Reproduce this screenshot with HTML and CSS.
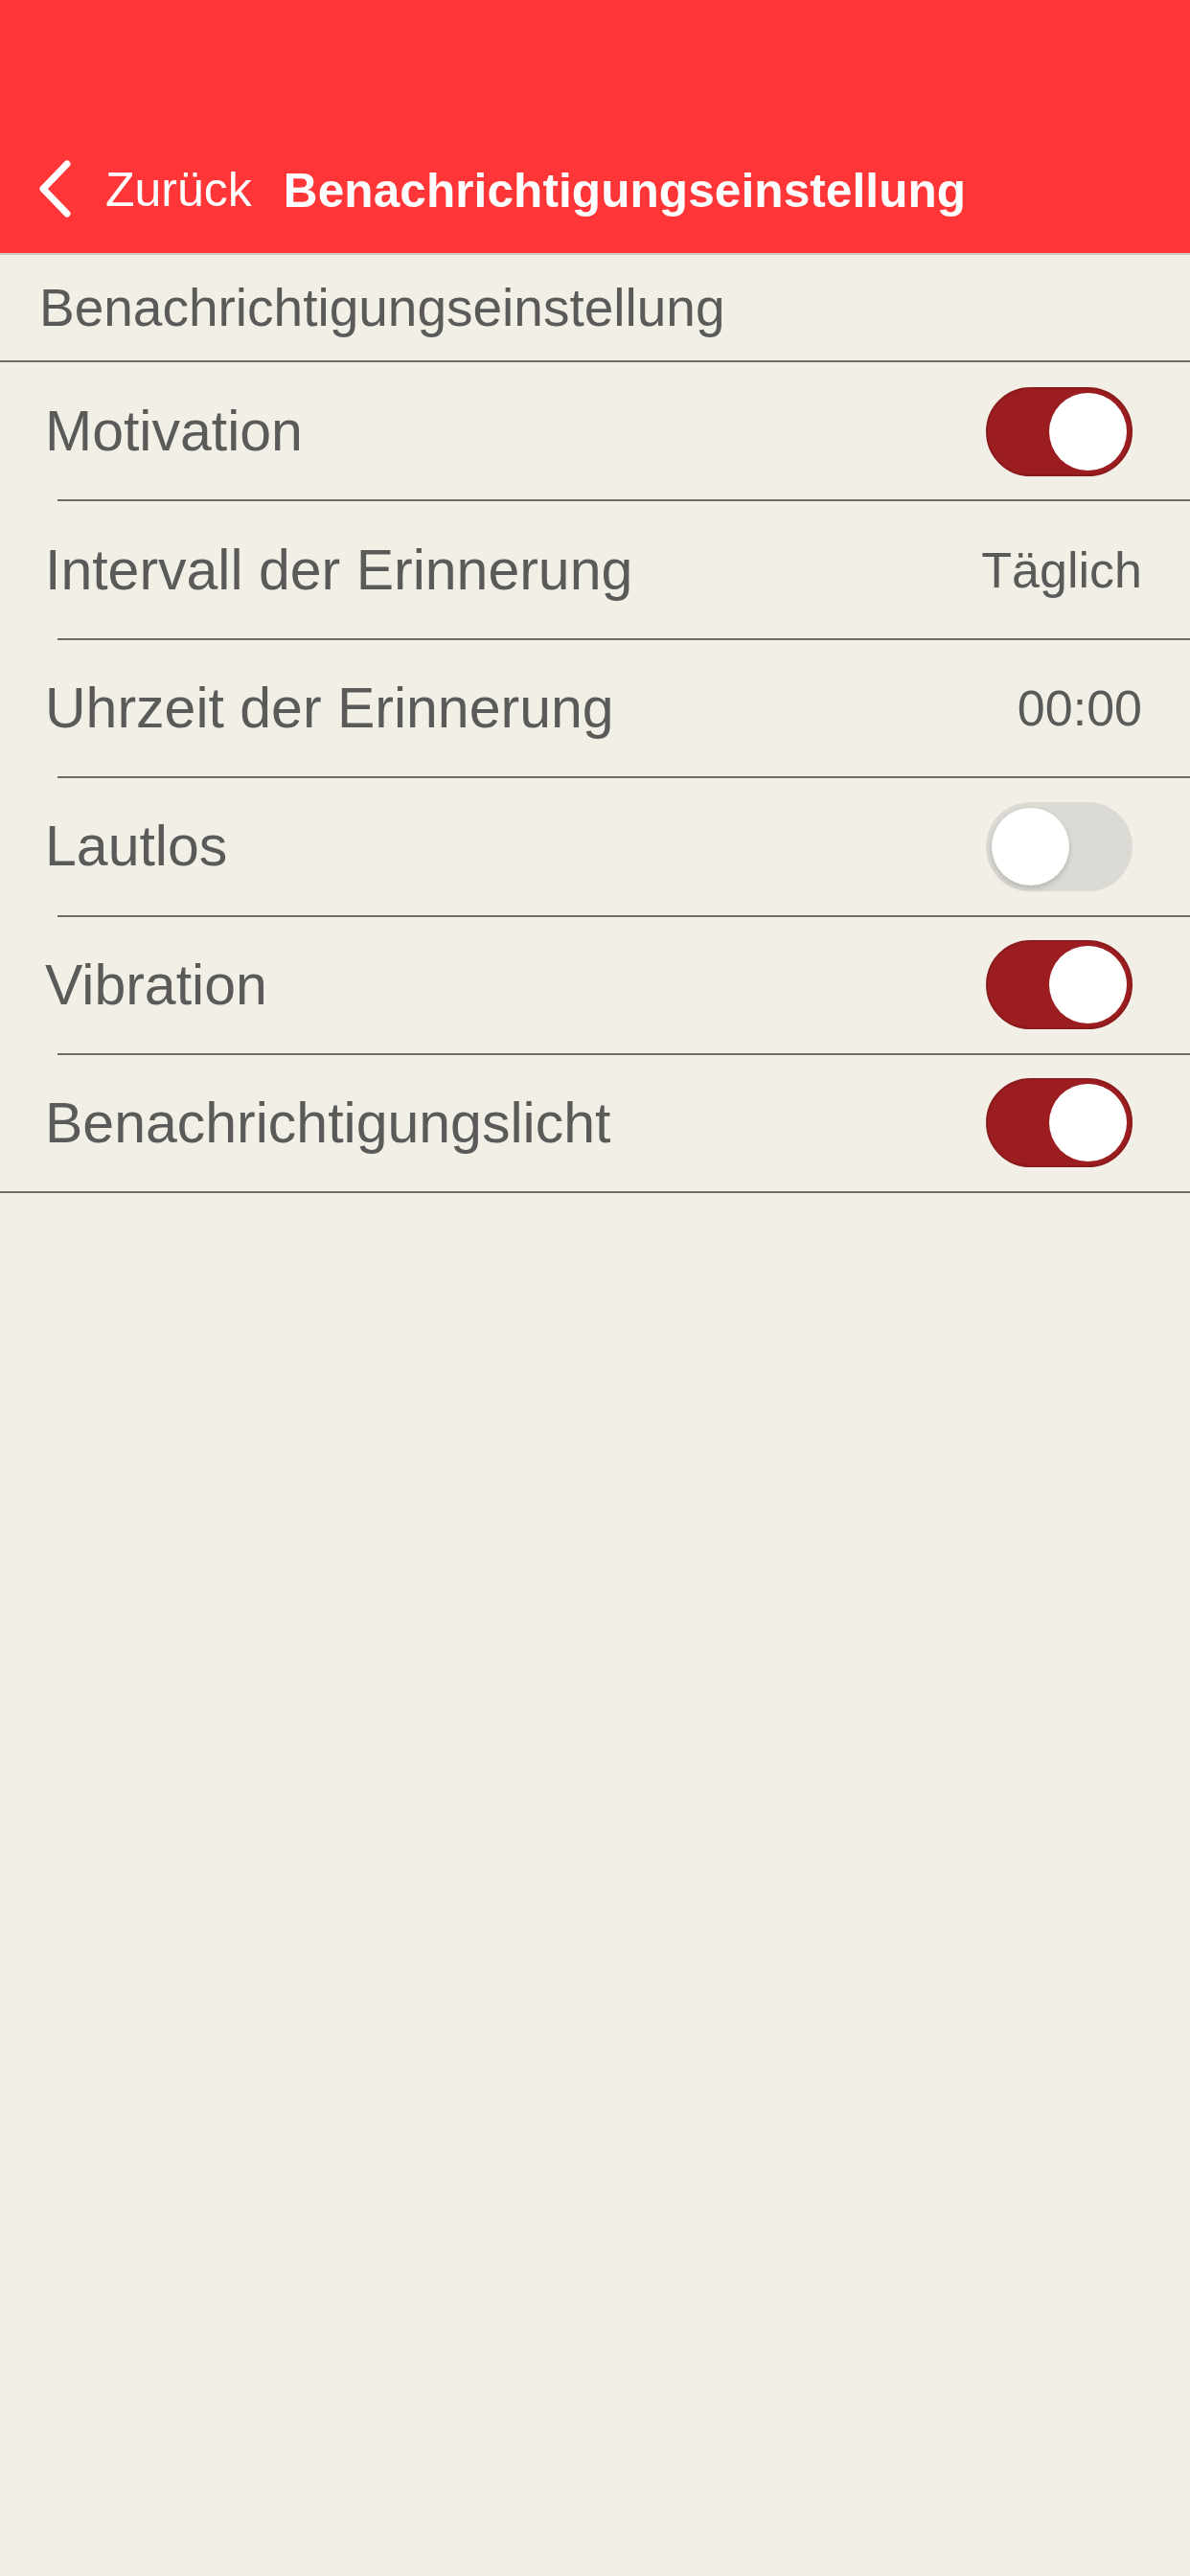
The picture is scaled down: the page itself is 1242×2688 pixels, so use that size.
FILE: index.html
```html
<!DOCTYPE html>
<html lang="de">
<head>
<meta charset="UTF-8">
<title>Benachrichtigungseinstellung</title>
<link rel="stylesheet" href="styles.css">
</head>
<body>
<div class="header">
  <div class="navbar">
    <div class="back">
      <svg class="chevron" width="40" height="60" viewBox="0 0 40 60">
        <polyline points="32,4 7,30 32,56" fill="none" stroke="#fff" stroke-width="7" stroke-linecap="round" stroke-linejoin="round"/>
      </svg>
      <span class="back-label">Zurück</span>
    </div>
    <div class="nav-title">Benachrichtigungseinstellung</div>
  </div>
</div>

<div class="section-title">Benachrichtigungseinstellung</div>

<div class="list">
  <div class="row">
    <span class="label">Motivation</span>
    <div class="toggle on"><div class="knob"></div></div>
  </div>
  <div class="row">
    <span class="label">Intervall der Erinnerung</span>
    <span class="value">Täglich</span>
  </div>
  <div class="row">
    <span class="label">Uhrzeit der Erinnerung</span>
    <span class="value">00:00</span>
  </div>
  <div class="row">
    <span class="label">Lautlos</span>
    <div class="toggle"><div class="knob"></div></div>
  </div>
  <div class="row">
    <span class="label">Vibration</span>
    <div class="toggle on"><div class="knob"></div></div>
  </div>
  <div class="row last">
    <span class="label">Benachrichtigungslicht</span>
    <div class="toggle on"><div class="knob"></div></div>
  </div>
</div>
</body>
</html>
```

FILE: styles.css
```css
html, body { margin: 0; padding: 0; }
body { background-color: #f2efe7; min-height: 2688px; font-family: "Liberation Sans", Arial, sans-serif; color: #5a5a58; }

.header { background-color: #ff3537; height: 264px; display: flex; flex-direction: column; justify-content: flex-end; }
.navbar { height: 132px; display: flex; align-items: center; color: white; }
.back { display: flex; align-items: center; padding-left: 38px; }
.chevron { display: block; margin-top: -2px; }
.back-label { font-size: 50px; margin-left: 32px; }
.nav-title { font-size: 49.5px; font-weight: bold; margin-left: 33px; letter-spacing: 0.1px; }

.section-title { font-size: 55px; padding-left: 41px; height: 114px; line-height: 111px; border-top: 2px solid #cfcbc4; border-bottom: 2px solid #6f6d69; box-sizing: border-box; }

.list { border-bottom: 2px solid #6f6d69; }
.row { height: 144.4px; display: flex; align-items: center; justify-content: space-between; padding: 0 50px 0 47px; position: relative; box-sizing: border-box; }
.row::after { content: ""; position: absolute; left: 60px; right: 0; bottom: -1px; height: 2px; background-color: #6f6d69; }
.row.last::after { display: none; }
.row.last { height: 143.5px; }
.label { font-size: 59px; }
.value { font-size: 52px; }

.toggle { width: 153px; height: 93px; border-radius: 47px; background-color: #dcdad5; box-sizing: border-box; padding: 6px; margin-right: 10px; display: flex; }
.toggle .knob { width: 81px; height: 81px; border-radius: 50%; background-color: white; box-shadow: 0 3px 6px rgba(0,0,0,0.18); }
.toggle.on { background-color: #9c1d20; border: 2px solid #8a1a1c; padding: 4px; justify-content: flex-end; }
.toggle.on .knob { box-shadow: none; }
```
